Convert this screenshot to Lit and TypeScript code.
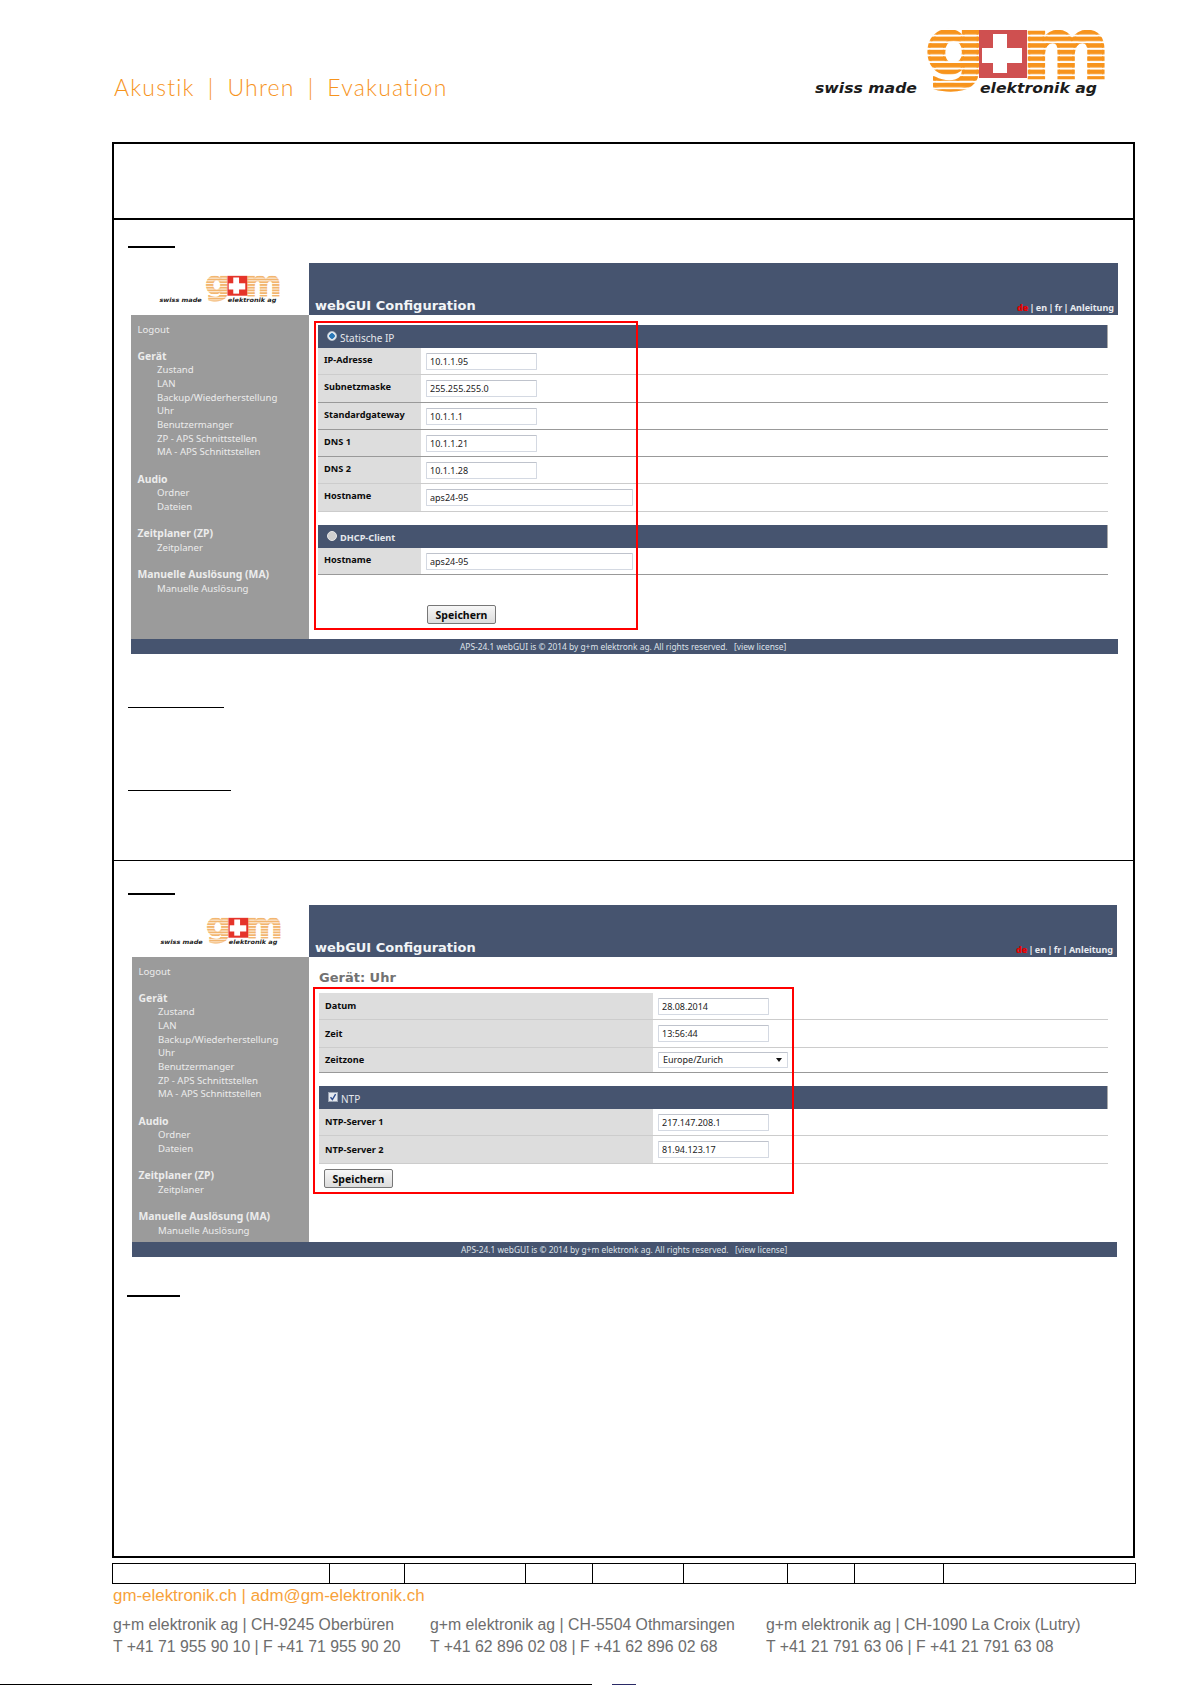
import { LitElement, html, css, svg } from "lit";
import { customElement, property } from "lit/decorators.js";

@customElement("gm-logo")
class GmLogo extends LitElement {
  @property({ type: Boolean }) small = false;
  static styles = css`
    :host { display: block; }
    svg { display: block; width: 100%; height: 100%; overflow: visible; }
    .big { font-family: "DejaVu Sans", sans-serif; font-weight: 700; stroke-width: 2.5; }
    .tag { font-family: "DejaVu Sans", sans-serif; font-weight: 700; font-style: italic; fill: #1c1c1c; }
  `;
  render() {
    const stripe = this.small ? "#f2b56f" : "#f7941d";
    const red = this.small ? "#e5342a" : "#cf5050";
    return html`<svg viewBox="815 28 292 70" aria-label="g+m swiss made elektronik ag">
      ${svg`
      <defs>
        <pattern id="st" patternUnits="userSpaceOnUse" x="0" y="30" width="10" height="6.6">
          <rect width="10" height="4.5" fill="${stripe}"></rect>
        </pattern>
      </defs>
      <text class="big" x="925" y="74" font-size="78" textLength="60" lengthAdjust="spacingAndGlyphs" fill="url(#st)" stroke="url(#st)">g</text>
      <text class="big" x="1022" y="78" font-size="84" textLength="88" lengthAdjust="spacingAndGlyphs" fill="url(#st)" stroke="url(#st)">m</text>
      <rect x="979" y="30" width="48" height="48" fill="${red}"></rect>
      <rect x="993" y="34" width="14" height="39" fill="#fff"></rect>
      <rect x="982" y="48" width="40" height="15" fill="#fff"></rect>
      <text class="tag" x="815" y="93" font-size="14" textLength="102" lengthAdjust="spacingAndGlyphs">swiss made</text>
      <text class="tag" x="980" y="93" font-size="14" textLength="117" lengthAdjust="spacingAndGlyphs">elektronik ag</text>
      `}
    </svg>`;
  }
}

type Row = { label: string; value: string; w?: "wide" | "select"; tall?: boolean; short?: boolean; dark?: boolean };

const NAV: { head?: string; items: string[] }[] = [
  { items: ["Logout"] },
  { head: "Gerät", items: ["Zustand", "LAN", "Backup/Wiederherstellung", "Uhr", "Benutzermanger", "ZP - APS Schnittstellen", "MA - APS Schnittstellen"] },
  { head: "Audio", items: ["Ordner", "Dateien"] },
  { head: "Zeitplaner (ZP)", items: ["Zeitplaner"] },
  { head: "Manuelle Auslösung (MA)", items: ["Manuelle Auslösung"] },
];

@customElement("app-root")
class AppRoot extends LitElement {
  static styles = css`
    :host { display: block; width: 1191px; height: 1685px; overflow: hidden; background: #fff; font-family: "Liberation Sans", Arial, sans-serif; color: #000; }
    .top { height: 142px; padding: 0 84px 0 114px; display: flex; justify-content: space-between; box-sizing: border-box; }
    .tagline { margin-top: 73px; height: 28px; display: flex; align-items: center; gap: 13px; font-family: Lato, sans-serif; font-weight: 300; font-size: 23px; letter-spacing: 1.2px; color: #f7941d; }
    .top gm-logo { margin-top: 28px; width: 292px; height: 70px; }
    .frame { margin-left: 112px; width: 1023px; height: 1416px; box-sizing: border-box; border: 2px solid #000; }
    .blank { height: 74px; border-bottom: 2px solid #000; }
    .sec1 { display: flow-root; height: 641px; border-bottom: 1px solid #000; padding-left: 14px; box-sizing: border-box; }
    .sec2 { display: flow-root; padding-left: 14px; }
    .rule { background: #000; height: 1px; }
    .r1 { width: 47px; height: 2px; margin-top: 26px; }
    .r2 { width: 96px; margin-top: 53px; }
    .r3 { width: 103px; margin-top: 82px; }
    .r4 { width: 47px; height: 2px; margin-top: 32px; }
    .r5 { width: 53px; height: 2px; margin-top: 38px; margin-left: -1px; }

    .shot { display: grid; grid-template-columns: 178px 1fr; font-family: "Liberation Sans", Arial, sans-serif; }
    .s1 { margin: 15px 0 0 3px; width: 987px; grid-template-rows: 52px 324px 15px; }
    .s2 { margin: 10px 0 0 4px; width: 985px; grid-template-columns: 177px 1fr; grid-template-rows: 52px 285px 15px; }
    .logo-cell { display: flex; padding: 12px 0 0 28px; box-sizing: border-box; }
    .logo-cell gm-logo { width: 122px; height: 29px; }
    .head { background: #46546f; display: flex; justify-content: space-between; align-items: flex-end; padding: 0 4px 0 6px; }
    .title { font-family: "DejaVu Sans", sans-serif; font-weight: 700; font-size: 13px; line-height: 18px; color: #f2f4f7; }
    .langs { font-family: "Noto Sans", sans-serif; font-weight: 700; font-size: 9px; word-spacing: -1px; line-height: 15px; color: #e8ebf0; }
    .langs b { color: #e80000; }
    .side { background: #9b9b9b; padding: 7.5px 0 0 6.5px; color: #ececec; font-family: "Noto Sans", sans-serif; font-size: 9.6px; line-height: 13.65px; overflow: hidden; }
    .group { margin-bottom: 13.65px; }
    .group b { display: block; font-weight: 700; font-size: 10.4px; }
    .group span { display: block; padding-left: 19.5px; }
    .group span.top-link { padding-left: 0; }
    .content { position: relative; padding: 10px 10px 0 9px; }
    .s2 .content { padding: 0 9px 0 10px; }
    .red { position: absolute; border: 2px solid #f00; box-sizing: border-box; pointer-events: none; }
    .s1 .red { left: 5px; top: 6px; width: 324px; height: 309px; }
    .s2 .red { left: 4px; top: 30px; width: 481px; height: 207px; }
    .page-h { height: 36px; padding-top: 12px; box-sizing: border-box; font-family: "DejaVu Sans", sans-serif; font-weight: 700; font-size: 13px; line-height: 18px; color: #727272; }
    .sect { height: 23px; background: #46546f; border-right: 1px solid #aaa; display: flex; align-items: center; gap: 3px; padding: 2px 0 0 9px; color: #e4e7ec; font-family: "Noto Sans", sans-serif; font-size: 10px; box-sizing: border-box; }
    .sect.bold { font-weight: 700; font-size: 9.2px; }
    .radio { width: 10px; height: 10px; border-radius: 50%; background: #cfcfcf; border: 1px solid #e6e6e6; flex: none; box-sizing: border-box; margin-top: -3px; }
    .radio.on { background: radial-gradient(circle, #2a78b8 0 2.5px, #e6edf3 3px); border-color: #b9c1cc; }
    .check { width: 10px; height: 10px; flex: none; margin-top: -3px; display: block; }
    .row { display: flex; height: 26px; border-bottom: 1px solid #ccc; }
    .row.tall { height: 27px; }
    .row.short { height: 24px; }
    .row.dark { border-bottom-color: #999; }
    .label { width: 103px; background: #ddd; padding: 5px 0 0 6px; box-sizing: border-box; font-family: "Noto Sans", sans-serif; font-weight: 700; font-size: 9.2px; line-height: 14px; color: #0b0b0b; flex: none; }
    .s2 .label { width: 334px; padding-top: 0; display: flex; align-items: center; }
    .val { flex: 1; padding: 5px 0 0 5px; min-width: 0; }
    .short .val { padding-top: 4px; }
    input, .select { display: block; width: 111px; height: 17px; box-sizing: border-box; border: 1px solid #d4d9e2; border-top-color: #bfc3cc; border-radius: 1px; padding: 0 3px; font-family: "Noto Sans", sans-serif; font-size: 9px; color: #222; background: #fff; outline: none; margin: 0; }
    input.wide { width: 207px; }
    .select { width: 130px; height: 16px; display: flex; justify-content: space-between; align-items: center; padding: 0 4px; line-height: 14px; }
    .arrow { width: 0; height: 0; border: 3.5px solid transparent; border-top: 4px solid #111; border-bottom: 0; margin-right: 1px; }
    .gap { height: 13px; }
    .btn { display: block; width: 69px; height: 19px; box-sizing: border-box; padding: 0; border: 1px solid #777; border-radius: 2px; background: linear-gradient(#f7f7f7, #dcdcdc); font-family: "Noto Sans", sans-serif; font-weight: 700; font-size: 10.5px; line-height: 16px; color: #0a0a0a; text-align: center; }
    .s1 .btn { margin: 30px 0 0 109px; }
    .s2 .btn { margin: 5px 0 0 5px; }
    .foot { grid-column: 1 / 3; background: #46546f; color: #dfe3ea; font-family: "Noto Sans", sans-serif; font-size: 8.4px; line-height: 15px; padding-left: 329px; white-space: pre; }

    .meta { margin: 5px 0 0 112px; width: 1024px; height: 21px; display: grid; grid-template-columns: 217px 75px 121px 67px 91px 104px 67px 89px 1fr; box-sizing: border-box; border: 1px solid #000; }
    .meta div { border-right: 1px solid #000; }
    .meta div:last-child { border-right: 0; }
    .contact { padding-left: 113px; font-size: 15.8px; color: #6d6d6d; }
    .web { color: #f7a23a; font-size: 16.9px; line-height: 22px; height: 22px; margin-top: 1px; }
    .addr { display: grid; grid-template-columns: 317px 336px 1fr; margin-top: 7px; line-height: 21.6px; }
    .end { display: flex; gap: 20px; margin-top: 27px; }
    .end i { display: block; height: 1px; width: 592px; background: #000; }
    .end u { display: block; height: 1px; width: 24px; background: #2a2a66; }
  `;

  private nav() {
    return html`<div class="side">${NAV.map((g) => html`<div class="group">
      ${g.head ? html`<b>${g.head}</b>` : ""}
      ${g.items.map((i) => html`<span class="${g.head ? "" : "top-link"}">${i}</span>`)}
    </div>`)}</div>`;
  }

  private row(r: Row) {
    return html`<div class="row ${r.tall ? "tall" : ""} ${r.short ? "short" : ""} ${r.dark ? "dark" : ""}">
      <div class="label">${r.label}</div>
      <div class="val">${r.w === "select"
        ? html`<div class="select"><span>${r.value}</span><span class="arrow"></span></div>`
        : html`<input class="${r.w === "wide" ? "wide" : ""}" .value=${r.value} />`}</div>
    </div>`;
  }

  private shell(cls: string, content: unknown) {
    return html`<div class="shot ${cls}">
      <div class="logo-cell"><gm-logo small></gm-logo></div>
      <div class="head">
        <div class="title">webGUI Configuration</div>
        <div class="langs"><b>de</b> | en | fr | Anleitung</div>
      </div>
      ${this.nav()}
      <div class="content">${content}</div>
      <div class="foot">APS-24.1 webGUI is © 2014 by g+m elektronk ag. All rights reserved.   [view license]</div>
    </div>`;
  }

  render() {
    const a: Row[] = [
      { label: "IP-Adresse", value: "10.1.1.95" },
      { label: "Subnetzmaske", value: "255.255.255.0", tall: true, dark: true },
      { label: "Standardgateway", value: "10.1.1.1", dark: true },
      { label: "DNS 1", value: "10.1.1.21", dark: true },
      { label: "DNS 2", value: "10.1.1.28" },
      { label: "Hostname", value: "aps24-95", w: "wide", tall: true },
    ];
    const b: Row[] = [
      { label: "Datum", value: "28.08.2014" },
      { label: "Zeit", value: "13:56:44", tall: true },
      { label: "Zeitzone", value: "Europe/Zurich", w: "select", dark: true, short: true },
    ];
    const c: Row[] = [
      { label: "NTP-Server 1", value: "217.147.208.1", tall: false },
      { label: "NTP-Server 2", value: "81.94.123.17", tall: true },
    ];
    return html`
      <div class="top">
        <div class="tagline"><span>Akustik</span><span>|</span><span>Uhren</span><span>|</span><span>Evakuation</span></div>
        <gm-logo></gm-logo>
      </div>
      <div class="frame">
        <div class="blank"></div>
        <div class="sec1">
          <div class="rule r1"></div>
          ${this.shell("s1", html`
            <div class="sect"><span class="radio on"></span>Statische IP</div>
            ${a.map((r) => this.row(r))}
            <div class="gap"></div>
            <div class="sect bold"><span class="radio"></span>DHCP-Client</div>
            ${this.row({ label: "Hostname", value: "aps24-95", w: "wide", dark: true })}
            <button class="btn">Speichern</button>
            <div class="red"></div>
          `)}
          <div class="rule r2"></div>
          <div class="rule r3"></div>
        </div>
        <div class="sec2">
          <div class="rule r4"></div>
          ${this.shell("s2", html`
            <div class="page-h">Gerät: Uhr</div>
            ${b.map((r) => this.row(r))}
            <div class="gap"></div>
            <div class="sect"><svg class="check" viewBox="0 0 10 10"><rect x=".5" y=".5" width="9" height="9" fill="#e4e8ee" stroke="#9aa4b4"></rect><path d="M2.5 5.2 4.4 7.5 7.6 2.2" fill="none" stroke="#2f4f8f" stroke-width="1.4"></path></svg>NTP</div>
            ${c.map((r) => this.row(r))}
            <button class="btn">Speichern</button>
            <div class="red"></div>
          `)}
          <div class="rule r5"></div>
        </div>
      </div>
      <div class="meta"><div></div><div></div><div></div><div></div><div></div><div></div><div></div><div></div><div></div></div>
      <div class="contact">
        <div class="web">gm-elektronik.ch | adm@gm-elektronik.ch</div>
        <div class="addr">
          <div>g+m elektronik ag | CH-9245 Oberbüren<br />T +41 71 955 90 10 | F +41 71 955 90 20</div>
          <div>g+m elektronik ag | CH-5504 Othmarsingen<br />T +41 62 896 02 08 | F +41 62 896 02 68</div>
          <div>g+m elektronik ag | CH-1090 La Croix (Lutry)<br />T +41 21 791 63 06 | F +41 21 791 63 08</div>
        </div>
      </div>
      <div class="end"><i></i><u></u></div>
    `;
  }
}
